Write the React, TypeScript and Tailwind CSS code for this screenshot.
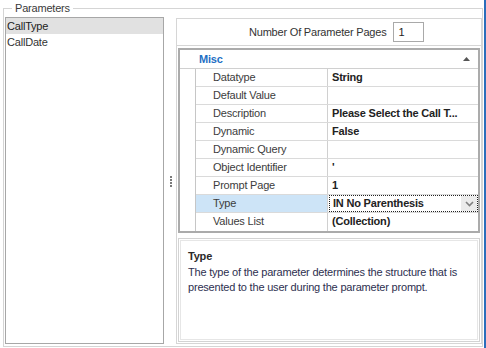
import React from "react";

const rows: { name: string; value: string; selected?: boolean }[] = [
  { name: "Datatype", value: "String" },
  { name: "Default Value", value: "" },
  { name: "Description", value: "Please Select the Call T..." },
  { name: "Dynamic", value: "False" },
  { name: "Dynamic Query", value: "" },
  { name: "Object Identifier", value: "'" },
  { name: "Prompt Page", value: "1" },
  { name: "Type", value: "IN No Parenthesis", selected: true },
  { name: "Values List", value: "(Collection)" },
];

export default function App() {
  return (
    <div
      className="w-[486px] h-[348px] bg-white flex text-[11px] tracking-[-0.2px] text-[#333333] overflow-hidden"
      style={{ fontFamily: '"Liberation Sans", Arial, sans-serif' }}
    >
      <div className="flex-1 pl-[3px] pt-[8px]">
        <div className="relative w-[480px] h-[339px] border border-[#d5d5d5] pl-[1px] pt-[8px] pb-[1px] flex">
          <span className="absolute left-[8px] -top-[8px] bg-white px-[3px] leading-[14px] text-[#3a3a3a]">
            Parameters
          </span>
          {/* list */}
          <div className="w-[159px] h-[327px] border border-[#a7a7a7] bg-white pt-0">
            <div className="h-[16px] leading-[16px] bg-[#e1e1e1] pl-[1px] text-[#222]">CallType</div>
            <div className="h-[16px] leading-[16px] pl-[1px] text-[#333]">CallDate</div>
          </div>
          {/* splitter */}
          <div className="w-[12px] flex flex-col items-center justify-center gap-[1px] pl-[1px]">
            <div className="w-[2px] h-[2px] bg-[#7a7a7a]" />
            <div className="w-[2px] h-[2px] bg-[#7a7a7a]" />
            <div className="w-[2px] h-[2px] bg-[#7a7a7a]" />
            <div className="w-[2px] h-[2px] bg-[#7a7a7a]" />
          </div>
          {/* right panel */}
          <div className="w-[306px] h-[326px] mt-[1px] border border-[#d6d6d6] flex flex-col">
            <div className="h-[27px] border-b border-[#d6d6d6] flex items-center pl-[72px] gap-[7px]">
              <span className="text-[#333]">Number Of Parameter Pages</span>
              <div className="w-[31px] h-[20px] border border-[#a9a9a9] leading-[18px] pl-[4px] text-[#222]">1</div>
            </div>
            <div className="mt-[2px] mx-[1px] border-2 border-[#ababab] flex flex-col">
              <div className="h-[18px] flex items-center pl-[19px] pr-[8px]">
                <span className="font-bold text-[#1e6fc4] flex-1">Misc</span>
                <svg width="7" height="4" viewBox="0 0 7 4">
                  <path d="M0 4 L3.5 0 L7 4 Z" fill="#555" />
                </svg>
              </div>
              <div className="flex border-t border-[#d0d0d0]">
                <div className="w-[16px] border-r border-[#c6c6c6]" />
                <div className="flex-1 flex flex-col">
                  {rows.map((r) => (
                    <div key={r.name} className="h-[18px] flex border-b border-[#dadada] last:border-b-0">
                      <div
                        className={
                          "w-[132px] border-r border-[#d0d0d0] pl-[17px] leading-[17px] text-[#3c3c3c] " +
                          (r.selected ? "bg-[#cde4f7]" : "")
                        }
                      >
                        {r.name}
                      </div>
                      {r.selected ? (
                        <div className="flex-1 flex border border-dotted border-[#222] ml-[1px]">
                          <div className="flex-1 pl-[3px] leading-[15px] font-bold text-[#222]">{r.value}</div>
                          <div className="w-[16px] bg-[#ebebeb] flex items-center justify-center">
                            <svg width="9" height="6" viewBox="0 0 9 6">
                              <path d="M1 1 L4.5 4.5 L8 1" stroke="#808080" strokeWidth="1.6" fill="none" />
                            </svg>
                          </div>
                        </div>
                      ) : (
                        <div className="flex-1 pl-[4px] leading-[17px] font-bold text-[#222] whitespace-nowrap overflow-hidden">
                          {r.value}
                        </div>
                      )}
                    </div>
                  ))}
                </div>
              </div>
            </div>
            <div className="mt-[5px] mx-[1px] mb-[1px] flex-1 border border-[#d3d3d3] p-[1px]">
              <div className="h-full border border-[#e6e6e6] pl-[7px] pt-[7px]">
                <div className="font-bold text-[#2a2a2a] leading-[16px]">Type</div>
                <div className="mt-[1px] leading-[15px] text-[#2d3050] pr-[4px]">
                  The type of the parameter determines the structure that is presented to the user during the parameter prompt.
                </div>
              </div>
            </div>
          </div>
        </div>
      </div>
      <div className="w-[2px] h-full bg-[#2a6ebb]" />
    </div>
  );
}
